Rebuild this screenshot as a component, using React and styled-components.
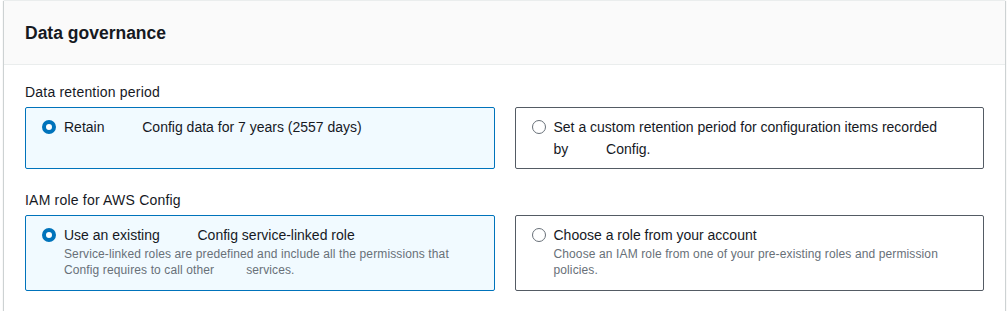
import React from "react";
import styled, { createGlobalStyle } from "styled-components";

const Global = createGlobalStyle`
  html, body { margin: 0; padding: 0; background: #ffffff; }
  body { font-family: "Liberation Sans", Arial, sans-serif; color: #16191f; }
  * { box-sizing: border-box; }
`;

const Page = styled.div`
  padding: 0 2px 0 4px;
`;

const Container = styled.section`
  background: #ffffff;
  border-top: 1px solid #eaeded;
  box-shadow: 0 1px 1px 0 rgba(0, 28, 36, 0.3), 1px 1px 1px 0 rgba(0, 28, 36, 0.15),
    -1px 1px 1px 0 rgba(0, 28, 36, 0.15);
`;

const Header = styled.header`
  background: #fafafa;
  border-bottom: 1px solid #eaeded;
  padding: 20px 20px 19px 21px;
`;

const Title = styled.h2`
  margin: 0;
  font-size: 17.5px;
  line-height: 24px;
  font-weight: 700;
  color: #16191f;
`;

const Body = styled.div`
  padding: 16px 21px 20px 21px;
  display: flex;
  flex-direction: column;
  gap: 20px;
`;

const Field = styled.div`
  display: flex;
  flex-direction: column;
  gap: 4px;
`;

const Label = styled.div`
  font-size: 14px;
  line-height: 22px;
  letter-spacing: 0.2px;
  color: #16191f;
`;

const Tiles = styled.div`
  display: grid;
  grid-template-columns: 1fr 1fr;
  gap: 20px;
`;

const Tile = styled.label`
  display: flex;
  align-items: flex-start;
  gap: 8px;
  padding: 8px 16px 8px 16px;
  border: 1px solid ${(p) => (p.$selected ? "#0073bb" : "#545b64")};
  background: ${(p) => (p.$selected ? "#f1faff" : "#ffffff")};
  border-radius: 2px;
  cursor: pointer;
`;

const RadioWrap = styled.span`
  flex: none;
  width: 14px;
  height: 14px;
  margin-top: 4px;
  display: flex;
`;

const Text = styled.div`
  display: flex;
  flex-direction: column;
  max-width: ${(p) => (p.$max ? `${p.$max}px` : "none")};
`;

const TileLabel = styled.div`
  font-size: 14px;
  line-height: 22px;
  color: #16191f;
`;

const Desc = styled.div`
  font-size: 12px;
  line-height: 16px;
  letter-spacing: 0.12px;
  color: #687078;
  padding-bottom: 4px;
`;

const Spacer = styled.span`
  display: inline-block;
  width: ${(p) => p.$w}px;
`;

function Radio({ checked }) {
  return (
    <RadioWrap>
      <svg width="14" height="14" viewBox="0 0 14 14">
        {checked ? (
          <circle cx="7" cy="7" r="5" fill="#ffffff" stroke="#0073bb" strokeWidth="4" />
        ) : (
          <circle cx="7" cy="7" r="6.5" fill="#ffffff" stroke="#687078" strokeWidth="1" />
        )}
      </svg>
    </RadioWrap>
  );
}

export default function App() {
  return (
    <>
      <Global />
      <Page>
        <Container>
          <Header>
            <Title>Data governance</Title>
          </Header>
          <Body>
            <Field>
              <Label>Data retention period</Label>
              <Tiles>
                <Tile $selected>
                  <Radio checked />
                  <Text>
                    <TileLabel>
                      Retain <Spacer $w={30} /> Config data for 7 years (2557 days)
                    </TileLabel>
                  </Text>
                </Tile>
                <Tile>
                  <Radio />
                  <Text $max={395}>
                    <TileLabel>
                      Set a custom retention period for configuration items recorded by{" "}
                      <Spacer $w={30} /> Config.
                    </TileLabel>
                  </Text>
                </Tile>
              </Tiles>
            </Field>
            <Field>
              <Label>IAM role for AWS Config</Label>
              <Tiles>
                <Tile $selected>
                  <Radio checked />
                  <Text>
                    <TileLabel>
                      Use an existing <Spacer $w={30} /> Config service-linked role
                    </TileLabel>
                    <Desc>
                      Service-linked roles are predefined and include all the permissions that
                      Config requires to call other <Spacer $w={25} /> services.
                    </Desc>
                  </Text>
                </Tile>
                <Tile>
                  <Radio />
                  <Text>
                    <TileLabel>Choose a role from your account</TileLabel>
                    <Desc>
                      Choose an IAM role from one of your pre-existing roles and permission
                      policies.
                    </Desc>
                  </Text>
                </Tile>
              </Tiles>
            </Field>
          </Body>
        </Container>
      </Page>
    </>
  );
}
